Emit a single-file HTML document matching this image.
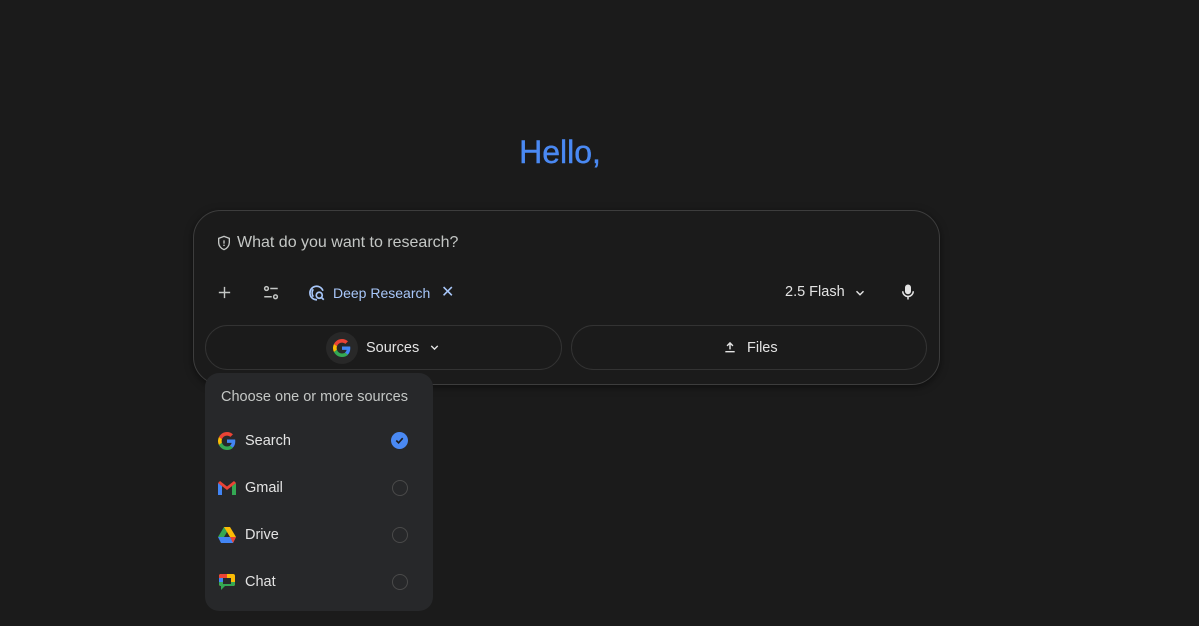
<!DOCTYPE html>
<html><head><style>
body{margin:0;width:1199px;height:626px;background:#1b1b1b;font-family:"Liberation Sans",sans-serif;position:relative;overflow:hidden;color:#e3e3e3}
.a{position:absolute}
.hello{left:0;width:1120px;text-align:center;top:134px;font-size:32px;color:#4a89f3;-webkit-text-stroke:0.4px #4a89f3}
.card{left:193px;top:210px;width:745px;height:173px;border:1px solid #3d3d3d;border-radius:28px;box-shadow:0 2px 8px rgba(0,0,0,.5)}
.pill{top:325px;height:45px;border:1px solid #333;border-radius:24px;box-sizing:border-box}
.dd{left:205px;top:373px;width:228px;height:238px;background:#27282a;border-radius:14px}
.item{left:245px;font-size:14.5px;color:#e3e3e3}
.rad{left:392px;width:14px;height:14px;border:1.5px solid #4a4a4a;border-radius:50%}
</style></head><body>
<div class="a hello">Hello,</div>
<div class="a card"></div>
<svg class="a" style="left:216px;top:235px" width="16" height="16" viewBox="0 0 24 24"><path d="M12 2 4 5v6c0 5 3.4 9.5 8 11 4.6-1.5 8-6 8-11V5z" fill="none" stroke="#c4c7c5" stroke-width="2"/><rect x="11" y="8" width="2" height="5" fill="#c4c7c5"/><circle cx="12" cy="15.5" r="1.2" fill="#c4c7c5"/></svg>
<div class="a" style="left:237px;top:234px;font-size:16px;color:#c4c7c5">What do you want to research?</div>
<svg class="a" style="left:216px;top:284px" width="17" height="17" viewBox="0 0 24 24"><path d="M12 4v16M4 12h16" stroke="#c4c7c5" stroke-width="2"/></svg>
<svg class="a" style="left:262px;top:284px" width="18" height="18" viewBox="0 0 24 24" fill="none" stroke="#c4c7c5" stroke-width="2"><circle cx="6" cy="6" r="2.5"/><path d="M11 6h10M3 17h10"/><circle cx="18" cy="17" r="2.5"/></svg>
<svg class="a" style="left:308px;top:284px" width="18" height="18" viewBox="0 0 24 24" fill="none" stroke="#a8c7fa" stroke-width="2.2"><path d="M20 9A9 9 0 1 0 12 21"/><circle cx="15" cy="15" r="4"/><path d="M18 18l3 3"/><path d="M7 7c-2 3-2 7 0 10"/></svg>
<div class="a" style="left:333px;top:285px;font-size:14px;color:#a8c7fa">Deep Research</div>
<div class="a" style="left:441px;top:282px;font-size:16px;color:#a8c7fa">✕</div>
<div class="a" style="left:785px;top:284px;font-size:14.5px;color:#e3e3e3">2.5 Flash</div>
<svg class="a" style="left:853px;top:286px" width="14" height="14" viewBox="0 0 24 24"><path d="M6 9l6 6 6-6" fill="none" stroke="#e3e3e3" stroke-width="2.5"/></svg>
<svg class="a" style="left:899px;top:282px" width="18" height="20" viewBox="0 0 24 24" fill="#e3e3e3"><rect x="8" y="2" width="8" height="13" rx="4"/><path d="M5 11a7 7 0 0 0 14 0" fill="none" stroke="#e3e3e3" stroke-width="2"/><rect x="11" y="18" width="2" height="4"/></svg>
<div class="a pill" style="left:205px;width:357px"></div>
<div class="a pill" style="left:571px;width:356px"></div>
<div class="a" style="left:326px;top:332px;width:32px;height:32px;border-radius:50%;background:#282828"></div>
<svg class="a" style="left:333px;top:339px" width="18" height="18" viewBox="0 0 48 48"><path fill="#EA4335" d="M24 9.5c3.5 0 6.6 1.2 9.1 3.6l6.8-6.8C35.8 2.4 30.3 0 24 0 14.6 0 6.6 5.4 2.6 13.3l7.9 6.2C12.4 13.7 17.7 9.5 24 9.5z"/><path fill="#4285F4" d="M46.1 24.5c0-1.6-.1-3.1-.4-4.5H24v9h12.4c-.5 2.9-2.2 5.4-4.7 7.1l7.6 5.9c4.4-4.1 6.8-10.1 6.8-17.5z"/><path fill="#FBBC05" d="M10.5 28.6A14.5 14.5 0 0 1 10.5 19.4L2.6 13.3a24 24 0 0 0 0 21.4z"/><path fill="#34A853" d="M24 48c6.5 0 11.9-2.1 15.9-5.8l-7.6-5.9c-2.1 1.4-4.9 2.3-8.3 2.3-6.3 0-11.6-4.2-13.5-10l-7.9 6.1C6.6 42.6 14.6 48 24 48z"/></svg>
<div class="a" style="left:366px;top:340px;font-size:14.5px;color:#e3e3e3">Sources</div>
<svg class="a" style="left:428px;top:341px" width="13" height="13" viewBox="0 0 24 24"><path d="M6 9l6 6 6-6" fill="none" stroke="#e3e3e3" stroke-width="2.5"/></svg>
<svg class="a" style="left:723px;top:340px" width="14" height="14" viewBox="0 0 24 24" fill="none" stroke="#e3e3e3" stroke-width="2.5"><path d="M12 16V5M7 10l5-5 5 5M4 20h16"/></svg>
<div class="a" style="left:747px;top:340px;font-size:14.5px;color:#e3e3e3">Files</div>

<div class="a dd"></div>
<div class="a" style="left:221px;top:389px;font-size:14.5px;color:#c4c7c5">Choose one or more sources</div>
<svg class="a" style="left:218px;top:432px" width="18" height="18" viewBox="0 0 48 48"><path fill="#EA4335" d="M24 9.5c3.5 0 6.6 1.2 9.1 3.6l6.8-6.8C35.8 2.4 30.3 0 24 0 14.6 0 6.6 5.4 2.6 13.3l7.9 6.2C12.4 13.7 17.7 9.5 24 9.5z"/><path fill="#4285F4" d="M46.1 24.5c0-1.6-.1-3.1-.4-4.5H24v9h12.4c-.5 2.9-2.2 5.4-4.7 7.1l7.6 5.9c4.4-4.1 6.8-10.1 6.8-17.5z"/><path fill="#FBBC05" d="M10.5 28.6A14.5 14.5 0 0 1 10.5 19.4L2.6 13.3a24 24 0 0 0 0 21.4z"/><path fill="#34A853" d="M24 48c6.5 0 11.9-2.1 15.9-5.8l-7.6-5.9c-2.1 1.4-4.9 2.3-8.3 2.3-6.3 0-11.6-4.2-13.5-10l-7.9 6.1C6.6 42.6 14.6 48 24 48z"/></svg>
<div class="a item" style="top:433px">Search</div>
<div class="a" style="left:391px;top:432px;width:17px;height:17px;border-radius:50%;background:#4a89f3"></div>
<svg class="a" style="left:394px;top:435px" width="11" height="11" viewBox="0 0 24 24"><path d="M5 12l5 5 9-10" fill="none" stroke="#1b1b1b" stroke-width="3.5"/></svg>
<svg class="a" style="left:218px;top:481px" width="18" height="14" viewBox="0 0 18 14"><path d="M0 2v12h4V5z" fill="#4285F4"/><path d="M14 5v9h4V2z" fill="#34A853"/><path d="M0 2l9 7 9-7-2-2-7 5.5L2 0z" fill="#EA4335"/></svg>
<div class="a item" style="top:480px">Gmail</div>
<div class="a rad" style="top:480px"></div>
<svg class="a" style="left:218px;top:527px" width="18" height="16" viewBox="0 0 18 16"><path d="M6 0h6l-6 10H0z" fill="#34A853"/><path d="M6 0h6l6 10h-6z" fill="#FBBC05"/><path d="M0 10l3 6h12l3-6z" fill="#4285F4"/><path d="M12 10h6l-3 6z" fill="#EA4335"/></svg>
<div class="a item" style="top:527px">Drive</div>
<div class="a rad" style="top:527px"></div>
<svg class="a" style="left:218px;top:573px" width="18" height="18" viewBox="0 0 18 18"><rect x="1" y="1" width="16" height="12" rx="2" fill="#FBBC05"/><path d="M1 3a2 2 0 0 1 2-2h6v4H5v4H1z" fill="#EA4335"/><path d="M1 9h4v2h8V9h4v2a2 2 0 0 1-2 2H7l-4 4v-4a2 2 0 0 1-2-2z" fill="#34A853"/><rect x="5" y="5" width="8" height="6" fill="#27282a"/><path d="M1 5h4v4H1z" fill="#4285F4"/></svg>
<div class="a item" style="top:574px">Chat</div>
<div class="a rad" style="top:574px"></div>
</body></html>
